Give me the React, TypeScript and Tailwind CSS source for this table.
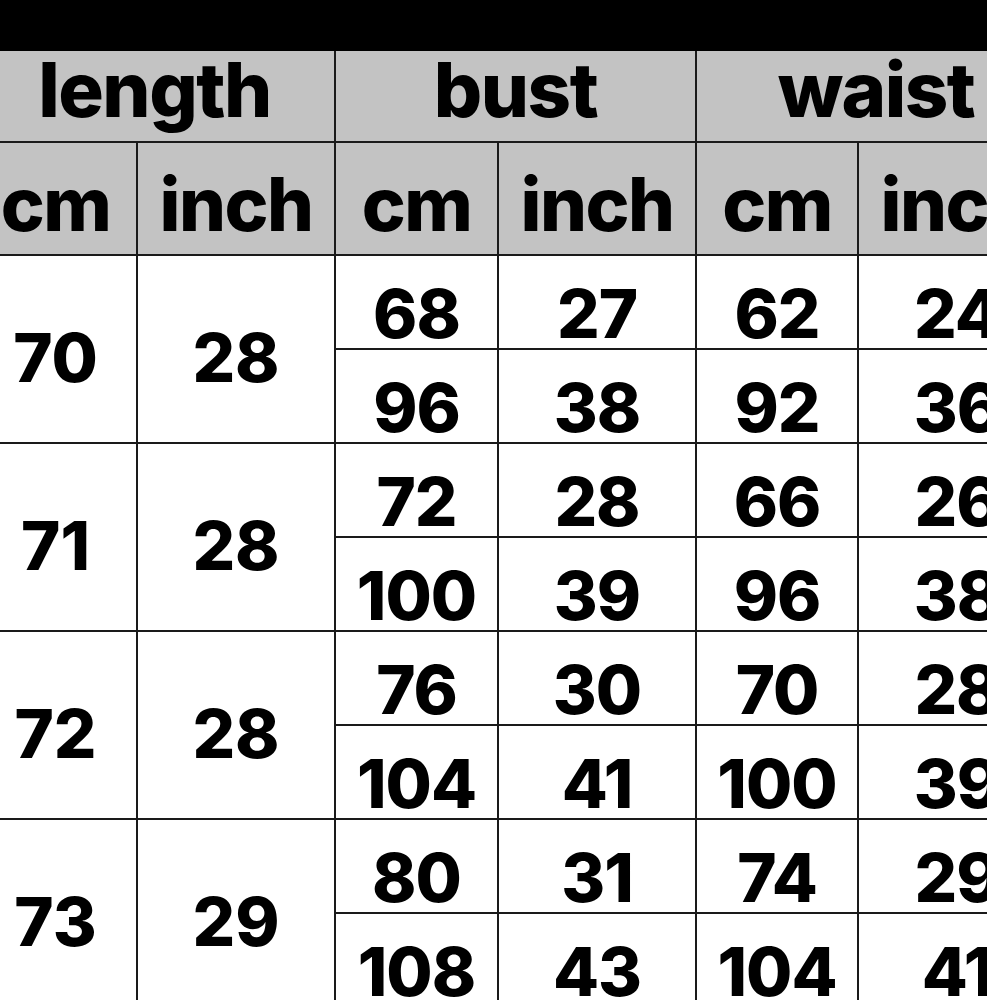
const rows = [
  { len: ['70', '28'], sub: [['68', '27', '62', '24'], ['96', '38', '92', '36']] },
  { len: ['71', '28'], sub: [['72', '28', '66', '26'], ['100', '39', '96', '38']] },
  { len: ['72', '28'], sub: [['76', '30', '70', '28'], ['104', '41', '100', '39']] },
  { len: ['73', '29'], sub: [['80', '31', '74', '29'], ['108', '43', '104', '41']] },
];

const font = { fontFamily: 'Inter, "Open Sans", sans-serif' };

export default function App() {
  return (
    <div className="w-[987px] h-[1000px] overflow-hidden bg-white text-black" style={font}>
      <div className="h-[51px] bg-black" />
      <table className="ml-[-27px] table-fixed border-collapse w-[1082px]">
        <colgroup>
          <col className="w-[163px]" />
          <col className="w-[198px]" />
          <col className="w-[163px]" />
          <col className="w-[198px]" />
          <col className="w-[162px]" />
          <col className="w-[198px]" />
        </colgroup>
        <thead className="bg-[#c3c3c3]">
          <tr className="h-[88px]">
            <th colSpan={2} className="border-2 border-t-0 border-[#1a1a1a] text-[76px] font-extrabold leading-none pb-[14px] tracking-[-1.5px]">length</th>
            <th colSpan={2} className="border-2 border-t-0 border-[#1a1a1a] text-[76px] font-extrabold leading-none pb-[14px] tracking-[-1.5px]">bust</th>
            <th colSpan={2} className="border-2 border-t-0 border-[#1a1a1a] text-[76px] font-extrabold leading-none pb-[14px] tracking-[-1.5px]">waist</th>
          </tr>
          <tr className="h-[113px]">
            {['cm', 'inch', 'cm', 'inch', 'cm', 'inch'].map((u, i) => (
              <th key={i} className="border-2 border-[#1a1a1a] text-[74px] font-extrabold leading-none pt-[11px] tracking-[-1.5px]">{u}</th>
            ))}
          </tr>
        </thead>
        <tbody>
          {rows.map((r, gi) =>
            r.sub.map((s, si) => (
              <tr key={`${gi}-${si}`} className="h-[94px]">
                {si === 0 && (
                  <>
                    <td rowSpan={2} className="border-2 border-[#1a1a1a] text-center text-[67px] font-extrabold leading-none pt-[16px]">{r.len[0]}</td>
                    <td rowSpan={2} className="border-2 border-[#1a1a1a] text-center text-[67px] font-extrabold leading-none pt-[16px]">{r.len[1]}</td>
                  </>
                )}
                {s.map((v, vi) => (
                  <td key={vi} className="border-2 border-[#1a1a1a] text-center text-[67px] font-extrabold leading-none pt-[22px] tracking-[-1px]">{v}</td>
                ))}
              </tr>
            ))
          )}
        </tbody>
      </table>
    </div>
  );
}
